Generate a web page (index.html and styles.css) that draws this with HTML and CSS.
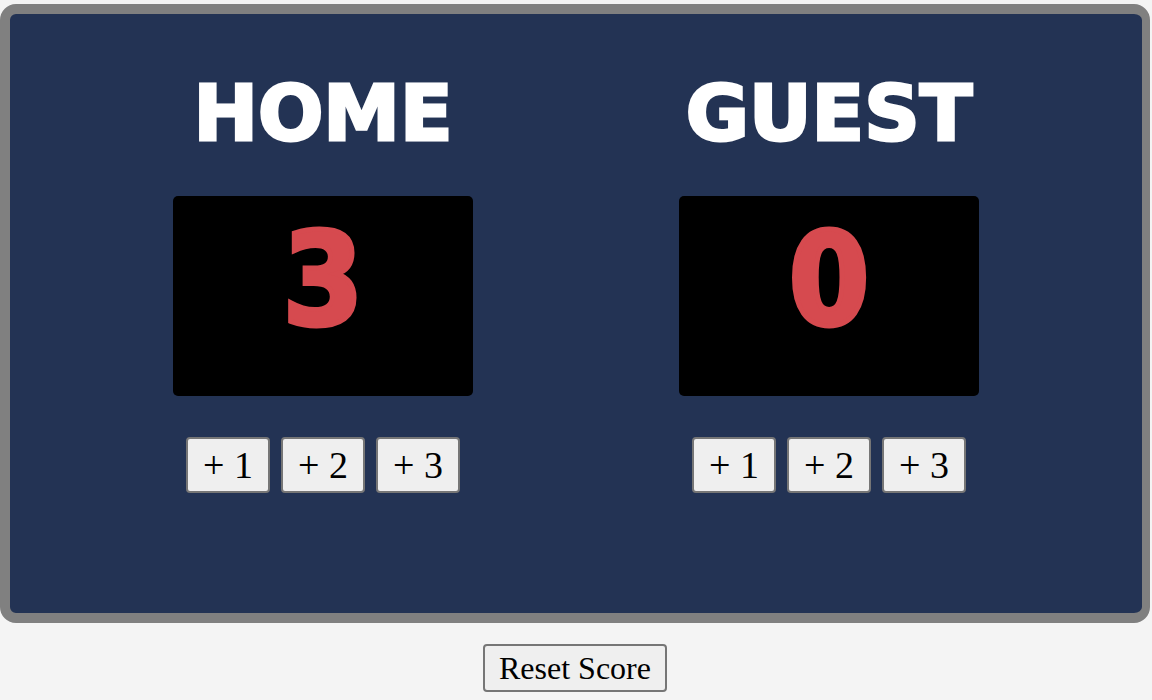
FILE: index.html
```html
<!DOCTYPE html>
<html>
<head>
<meta charset="utf-8">
<link rel="stylesheet" href="styles.css">
</head>
<body>
<div class="board">
  <section class="team">
    <h2 class="team-name">HOME</h2>
    <div class="score">3</div>
    <div class="buttons">
      <button class="btn">+ 1</button>
      <button class="btn">+ 2</button>
      <button class="btn">+ 3</button>
    </div>
  </section>
  <section class="team">
    <h2 class="team-name">GUEST</h2>
    <div class="score">0</div>
    <div class="buttons">
      <button class="btn">+ 1</button>
      <button class="btn">+ 2</button>
      <button class="btn">+ 3</button>
    </div>
  </section>
</div>
<div class="footer">
  <button class="reset">Reset Score</button>
</div>
</body>
</html>
```

FILE: styles.css
```css
html, body {
  margin: 0;
  padding: 0;
  background: #f4f4f4;
}
body {
  padding-top: 4px;
  font-family: "DejaVu Sans", Verdana, sans-serif;
}
.board {
  box-sizing: border-box;
  width: 1150px;
  height: 619px;
  background: #233354;
  border: 10px solid #808080;
  border-right-width: 8px;
  border-radius: 16px;
  display: flex;
  justify-content: center;
  gap: 206px;
  padding-top: 53px;
}
.team {
  width: 300px;
  display: flex;
  flex-direction: column;
  align-items: center;
}
.team-name {
  margin: 0;
  height: 93px;
  color: #ffffff;
  font-size: 77px;
  font-weight: bold;
  line-height: 93px;
  -webkit-text-stroke: 3px #ffffff;
}
.score {
  box-sizing: border-box;
  margin-top: 36px;
  width: 300px;
  height: 200px;
  background: #000;
  border-radius: 5px;
  color: #d64a4f;
  font-family: "DejaVu Sans Condensed", "DejaVu Sans", sans-serif;
  font-stretch: condensed;
  font-size: 128px;
  font-weight: bold;
  text-align: center;
  line-height: normal;
  padding-top: 9px;
  -webkit-text-stroke: 5px #d64a4f;
}
.buttons {
  margin-top: 41px;
  display: flex;
  gap: 11px;
}
.btn, .reset {
  font-family: "Liberation Serif", "Times New Roman", serif;
  background: #efefef;
  border: 2px solid #767676;
  border-radius: 4px;
  color: #000;
  line-height: normal;
}
.btn {
  font-size: 38px;
  height: 56px;
  padding: 0 15px;
}
.footer {
  display: flex;
  justify-content: center;
  margin-top: 21px;
  padding-right: 2px;
}
.reset {
  font-size: 32px;
  height: 48px;
  padding: 0 14px;
}
```
